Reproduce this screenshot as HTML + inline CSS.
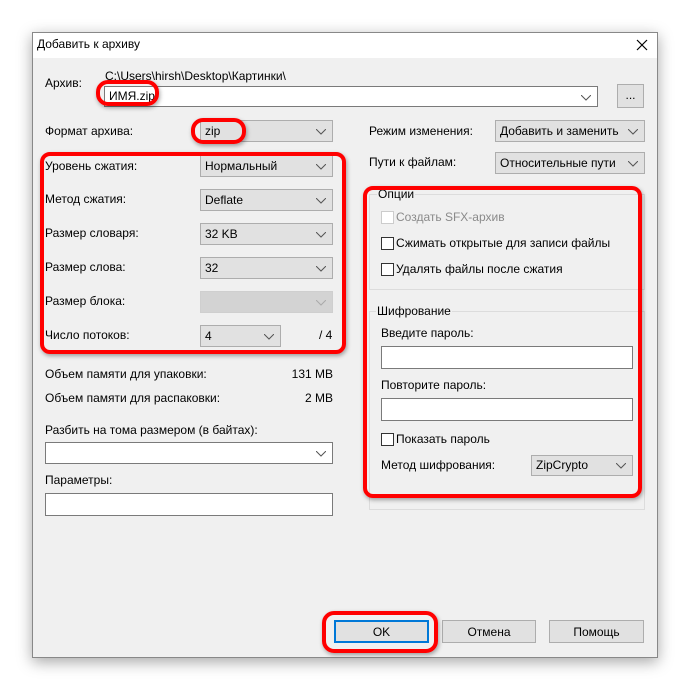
<!DOCTYPE html>
<html><head><meta charset="utf-8"><style>
*{box-sizing:border-box;margin:0;padding:0}
body{width:690px;height:690px;background:#fff;position:relative;overflow:hidden;font-family:"Liberation Sans","DejaVu Sans",sans-serif;font-size:12px;color:#000}
.a{position:absolute;white-space:nowrap}
.win{position:absolute;left:32px;top:32px;width:626px;height:626px;background:#f0f0f0;border:1px solid #888;box-shadow:0 4px 14px rgba(0,0,0,.35)}
.tb{position:absolute;left:33px;top:33px;width:624px;height:25px;background:#fff}
.cb{position:absolute;background:#e1e1e1;border:1px solid #adadad;height:22px;padding:3px 0 0 4px}
.cb.w{background:#fff;border-color:#7a7a7a}
.cb.d{background:#d3d3d3;border-color:#cfcfcf}
.cb svg{position:absolute;right:6px;top:8px}
.tx{position:absolute;background:#fff;border:1px solid #7a7a7a}
.ck{position:absolute;width:13px;height:13px;border:1px solid #333;background:#fff}
.btn{position:absolute;height:23px;background:#e1e1e1;border:1px solid #adadad;text-align:center;padding-top:4px}
.red{position:absolute;border:4px solid #f00;border-radius:10px;box-shadow:1px 2px 4px rgba(0,0,0,.35)}
.lt{color:#6d6d6d}
</style></head><body>
<div class="win"></div>
<div class="tb"></div>
<div class="a" style="left:37px;top:37px">Добавить к архиву</div>
<svg class="a" style="left:636px;top:39px" width="12" height="12"><path d="M1 1L11 11M11 1L1 11" stroke="#000" stroke-width="1.2"/></svg>

<div class="a" style="left:45px;top:76px">Архив:</div>
<div class="a" style="left:105px;top:69px">C:\Users\hirsh\Desktop\Картинки\</div>
<div class="cb w" style="left:104px;top:86px;width:494px;height:21px;padding-top:2px">ИМЯ.zip<svg width="10" height="6"><path d="M0 0L5 5L10 0" fill="none" stroke="#555"/></svg></div>
<div class="btn" style="left:617px;top:84px;width:27px;height:24px;padding-top:3px">...</div>

<div class="a" style="left:45px;top:124px">Формат архива:</div>
<div class="cb" style="left:200px;top:120px;width:133px">zip<svg width="10" height="6"><path d="M0 0L5 5L10 0" fill="none" stroke="#555"/></svg></div>

<div class="a" style="left:45px;top:159px">Уровень сжатия:</div>
<div class="cb" style="left:200px;top:155px;width:133px">Нормальный<svg width="10" height="6"><path d="M0 0L5 5L10 0" fill="none" stroke="#555"/></svg></div>
<div class="a" style="left:45px;top:192px">Метод сжатия:</div>
<div class="cb" style="left:200px;top:189px;width:133px">Deflate<svg width="10" height="6"><path d="M0 0L5 5L10 0" fill="none" stroke="#555"/></svg></div>
<div class="a" style="left:45px;top:226px">Размер словаря:</div>
<div class="cb" style="left:200px;top:223px;width:133px">32 KB<svg width="10" height="6"><path d="M0 0L5 5L10 0" fill="none" stroke="#555"/></svg></div>
<div class="a" style="left:45px;top:260px">Размер слова:</div>
<div class="cb" style="left:200px;top:257px;width:133px">32<svg width="10" height="6"><path d="M0 0L5 5L10 0" fill="none" stroke="#555"/></svg></div>
<div class="a" style="left:45px;top:294px">Размер блока:</div>
<div class="cb d" style="left:200px;top:291px;width:133px"><svg width="10" height="6"><path d="M0 0L5 5L10 0" fill="none" stroke="#aaa"/></svg></div>
<div class="a" style="left:45px;top:328px">Число потоков:</div>
<div class="cb" style="left:200px;top:325px;width:81px">4<svg width="10" height="6"><path d="M0 0L5 5L10 0" fill="none" stroke="#555"/></svg></div>
<div class="a" style="left:319px;top:328px">/ 4</div>

<div class="a" style="left:45px;top:367px">Объем памяти для упаковки:</div>
<div class="a" style="right:357px;top:367px">131 MB</div>
<div class="a" style="left:45px;top:391px">Объем памяти для распаковки:</div>
<div class="a" style="right:357px;top:391px">2 MB</div>
<div class="a" style="left:45px;top:423px">Разбить на тома размером (в байтах):</div>
<div class="cb w" style="left:45px;top:442px;width:288px"><svg width="10" height="6"><path d="M0 0L5 5L10 0" fill="none" stroke="#555"/></svg></div>
<div class="a" style="left:45px;top:473px">Параметры:</div>
<div class="tx" style="left:45px;top:493px;width:288px;height:23px"></div>

<div class="a" style="left:369px;top:124px">Режим изменения:</div>
<div class="cb" style="left:495px;top:120px;width:150px">Добавить и заменить<svg width="10" height="6"><path d="M0 0L5 5L10 0" fill="none" stroke="#555"/></svg></div>
<div class="a" style="left:369px;top:155px">Пути к файлам:</div>
<div class="cb" style="left:495px;top:152px;width:150px">Относительные пути<svg width="10" height="6"><path d="M0 0L5 5L10 0" fill="none" stroke="#555"/></svg></div>

<div class="a" style="left:369px;top:194px;width:276px;height:96px;border:1px solid #dcdcdc"></div>
<div class="a" style="left:377px;top:187px;background:#f0f0f0;padding:0 1px">Опции</div>
<div class="ck" style="left:381px;top:211px;border-color:#ccc"></div><div class="a lt" style="left:396px;top:210px;color:#8a8a8a">Создать SFX-архив</div>
<div class="ck" style="left:381px;top:237px"></div><div class="a" style="left:396px;top:236px">Сжимать открытые для записи файлы</div>
<div class="ck" style="left:381px;top:263px"></div><div class="a" style="left:396px;top:262px">Удалять файлы после сжатия</div>

<div class="a" style="left:369px;top:311px;width:276px;height:199px;border:1px solid #dcdcdc"></div>
<div class="a" style="left:376px;top:304px;background:#f0f0f0;padding:0 1px">Шифрование</div>
<div class="a" style="left:381px;top:326px">Введите пароль:</div>
<div class="tx" style="left:381px;top:346px;width:252px;height:23px"></div>
<div class="a" style="left:381px;top:378px">Повторите пароль:</div>
<div class="tx" style="left:381px;top:398px;width:252px;height:23px"></div>
<div class="ck" style="left:381px;top:433px"></div><div class="a" style="left:396px;top:432px">Показать пароль</div>
<div class="a" style="left:381px;top:458px">Метод шифрования:</div>
<div class="cb" style="left:531px;top:455px;width:102px;height:21px;padding-top:2px">ZipCrypto<svg width="10" height="6" style="top:7px"><path d="M0 0L5 5L10 0" fill="none" stroke="#555"/></svg></div>

<div class="btn" style="left:334px;top:620px;width:95px;border:2px solid #0078d7;padding-top:3px">OK</div>
<div class="btn" style="left:442px;top:620px;width:94px">Отмена</div>
<div class="btn" style="left:549px;top:620px;width:95px">Помощь</div>

<div class="red" style="left:96px;top:80px;width:63px;height:26px;border-radius:12px"></div>
<div class="red" style="left:191px;top:118px;width:55px;height:26px;border-radius:12px"></div>
<div class="red" style="left:40px;top:152px;width:306px;height:202px"></div>
<div class="red" style="left:363px;top:186px;width:279px;height:312px"></div>
<div class="red" style="left:322px;top:611px;width:116px;height:42px;border-radius:12px"></div>
</body></html>
